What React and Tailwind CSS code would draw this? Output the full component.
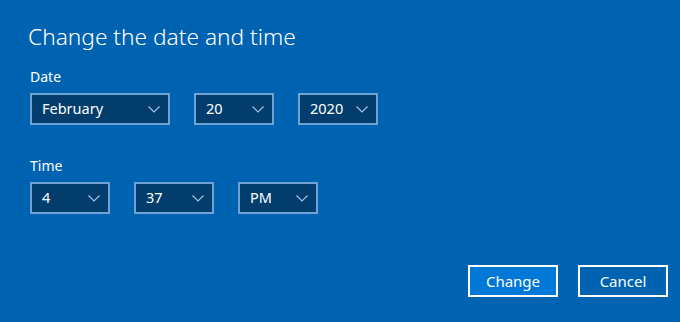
import React from "react";

function Chevron() {
  return (
    <svg width="12" height="7" viewBox="0 0 12 7" fill="none" className="shrink-0">
      <path d="M0.5 0.5 L6 6 L11.5 0.5" stroke="#a9c6e4" strokeWidth="1.1" />
    </svg>
  );
}

function Dropdown({ value, width }) {
  return (
    <div
      className={`flex h-[32px] items-center justify-between border-2 border-[#6fa3d6] bg-[#023d6d] pl-[10px] pr-[8px] text-[14.5px] text-white ${width}`}
    >
      <span>{value}</span>
      <Chevron />
    </div>
  );
}

export default function App() {
  return (
    <div
      className="flex h-[322px] w-[680px] flex-col bg-[#0063b1] text-white"
      style={{ fontFamily: '"Noto Sans", "Open Sans", sans-serif' }}
    >
      <div className="pl-[28px] pt-[21px]">
        <h1 className="text-[22.7px] font-light leading-[32px]">Change the date and time</h1>
      </div>

      <div className="flex flex-col pl-[30px]">
        <div className="mt-[14px] text-[14px] leading-[20px]">Date</div>
        <div className="mt-[6px] flex gap-[24px]">
          <Dropdown value="February" width="w-[140px]" />
          <Dropdown value="20" width="w-[80px]" />
          <Dropdown value="2020" width="w-[80px]" />
        </div>

        <div className="mt-[31px] text-[14px] leading-[20px]">Time</div>
        <div className="mt-[6px] flex gap-[24px]">
          <Dropdown value="4" width="w-[80px]" />
          <Dropdown value="37" width="w-[80px]" />
          <Dropdown value="PM" width="w-[80px]" />
        </div>
      </div>

      <div className="mt-auto flex justify-end gap-[20px] pb-[25px] pr-[12px]">
        <button className="h-[32px] w-[90px] border-2 border-white bg-[#0078d7] text-[15px] text-white">
          Change
        </button>
        <button className="h-[32px] w-[90px] border-2 border-white bg-[#0063b1] text-[15px] text-white">
          Cancel
        </button>
      </div>
    </div>
  );
}
